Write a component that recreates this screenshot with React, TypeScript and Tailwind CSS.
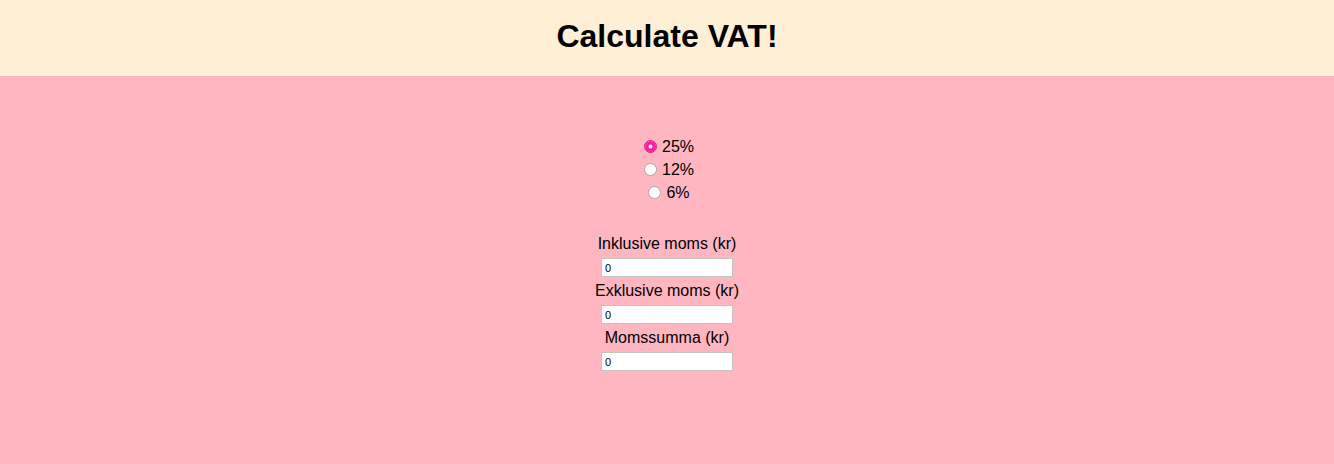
import { useState } from "react";

const rates = [25, 12, 6];

const fields = ["Inklusive moms (kr)", "Exklusive moms (kr)", "Momssumma (kr)"];

export default function App() {
  const [rate, setRate] = useState(25);

  return (
    <div className="min-h-[464px] bg-[#ffb6c1] font-['Liberation_Sans',Arial,sans-serif] text-black">
      <header className="flex h-[76px] items-center justify-center bg-[#ffefd5] pb-1">
        <h1 className="text-[32px] font-bold leading-none">Calculate VAT!</h1>
      </header>

      <main className="flex flex-col items-center pt-[59px]">
        <div className="flex flex-col items-center">
          {rates.map((r) => (
            <label key={r} className="flex h-[23px] items-center gap-[5px] pl-[4px] text-[16px]">
              <input
                type="radio"
                name="rate"
                checked={rate === r}
                onChange={() => setRate(r)}
                className="h-[13px] w-[13px] appearance-none rounded-full border border-[#a9a9a9] bg-white checked:border-[#e0107a] checked:shadow-[inset_0_0_0_3.5px_#ff1aa3]"
              />
              <span>{r}%</span>
            </label>
          ))}
        </div>

        <div className="mt-[30px] flex flex-col items-center gap-[4px]">
          {fields.map((f) => (
            <div key={f} className="flex flex-col items-center">
              <div className="h-5 text-[16px] leading-5">{f}</div>
              <input
                type="text"
                defaultValue="0"
                className="mt-1 h-[19px] w-[132px] border border-[#c4c4c4] bg-white px-[3px] text-[11px] text-black outline-none"
              />
            </div>
          ))}
        </div>
      </main>
    </div>
  );
}
